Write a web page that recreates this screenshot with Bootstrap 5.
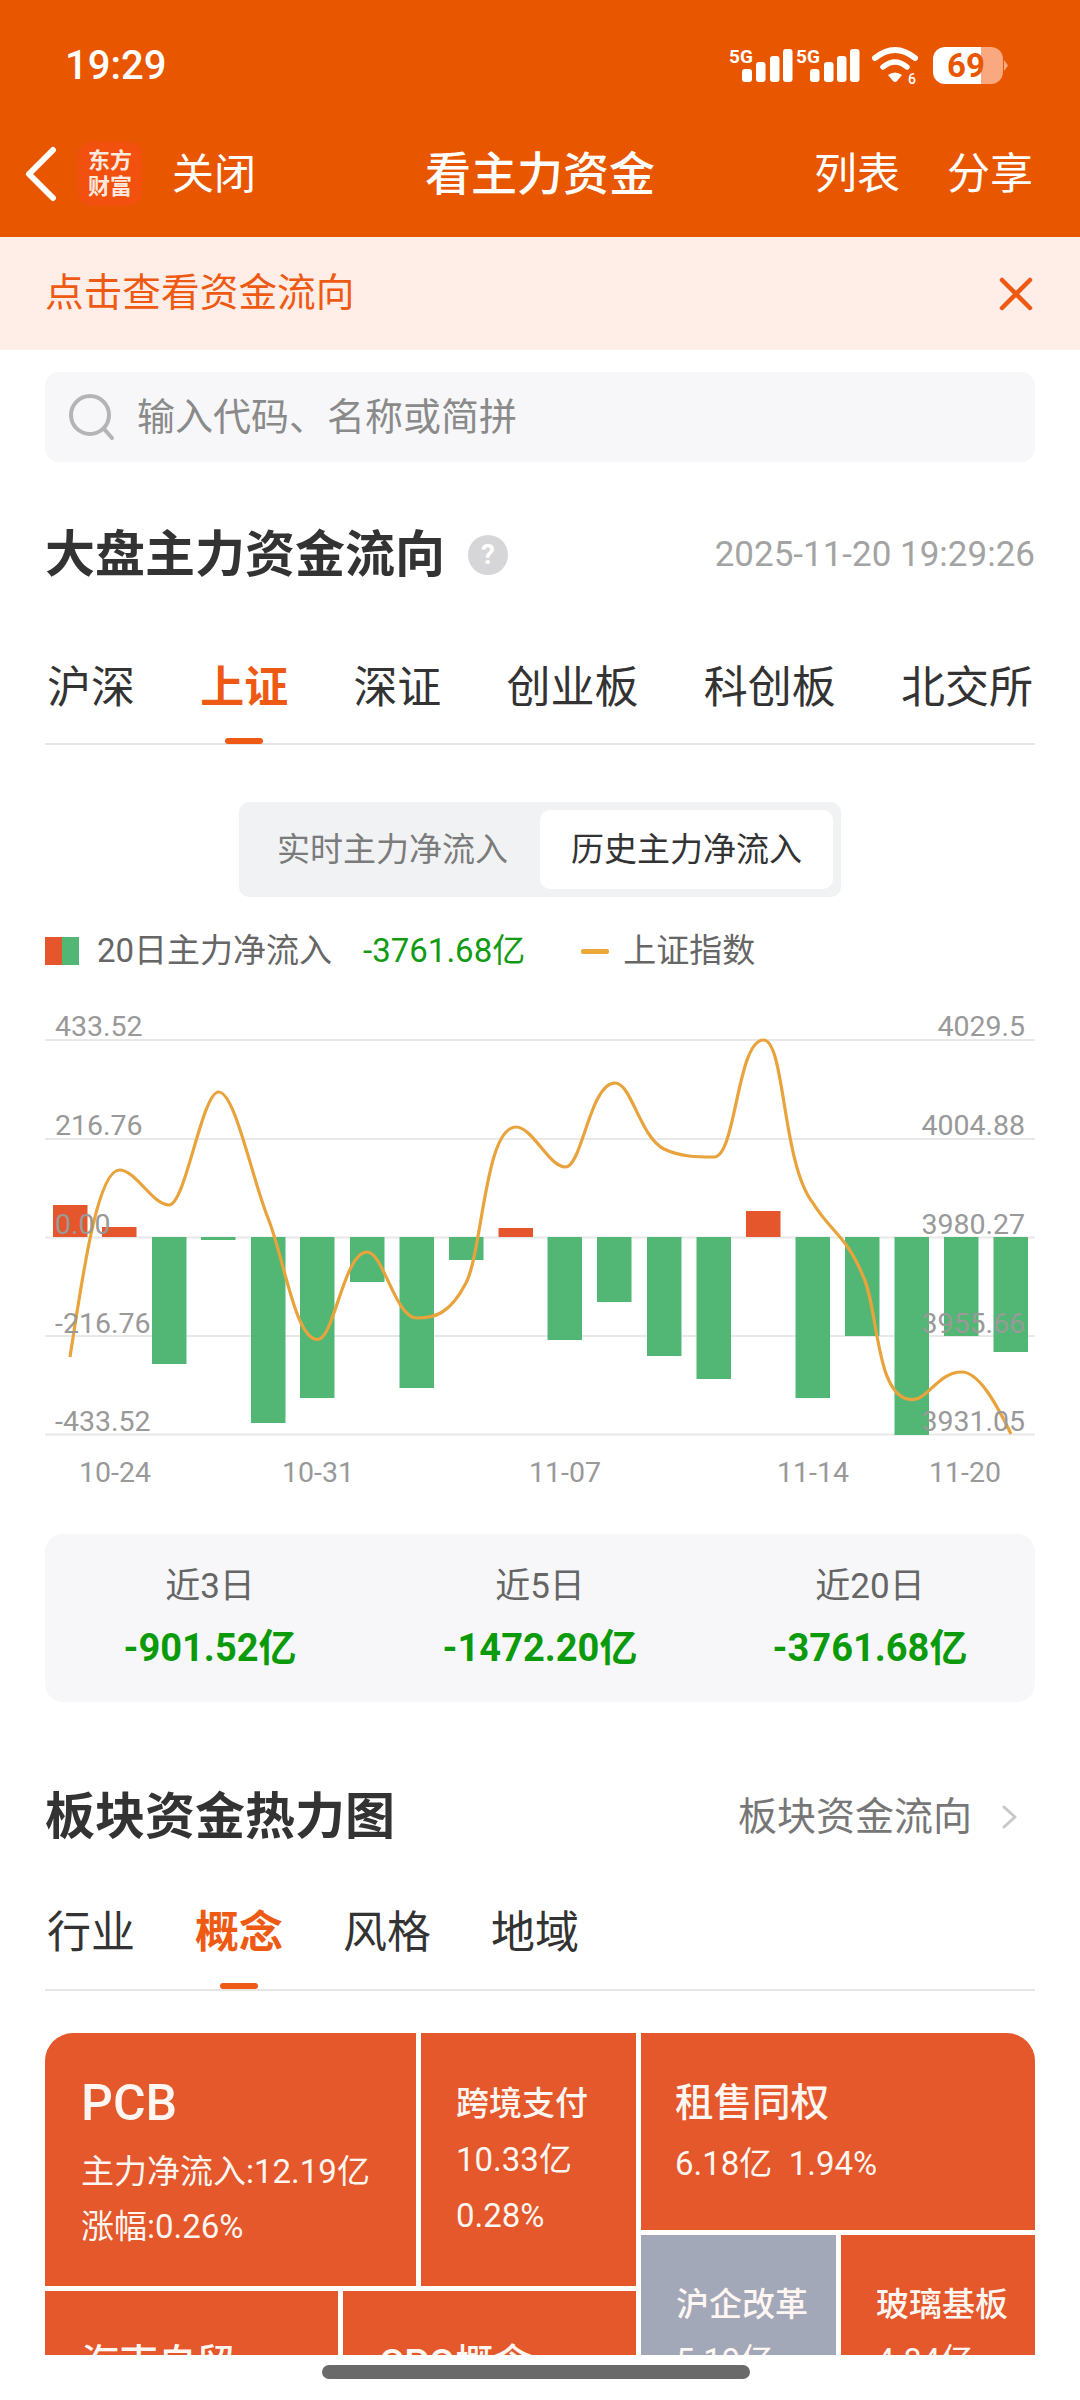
<!DOCTYPE html>
<html lang="zh-CN">
<head>
<meta charset="utf-8">
<title>看主力资金</title>
<link rel="stylesheet" href="https://cdn.jsdelivr.net/npm/bootstrap@5.3.0/dist/css/bootstrap.min.css">
<style>
body{margin:0;width:1080px;height:2400px;overflow:hidden;background:#fff;font-family:Roboto,"Noto Sans CJK SC",sans-serif;color:#333}
.hdr{height:237px;background:#e85700;color:#fff}
.status-row{height:52px;padding-top:0;margin-top:0;position:relative;top:0}
.hdr-top{padding-top:40px}
.clock{font-size:40px;font-weight:500;line-height:52px;margin-left:65px}
.status-icons{margin-right:70px}
.nav-row{height:64px;margin-top:50px}
.back-btn{margin-left:24px;width:54px}
.logo-box{width:64px;height:64px;background:#f2500f;border-radius:13px;font-size:22px;line-height:26px;font-weight:700;color:#ffe9df;letter-spacing:0}
.close-txt{font-size:42px;margin-left:30px}
.nav-title{font-size:46px;font-weight:500}
.nav-side{width:222px}
.nav-left{width:316px}
.nav-right{width:316px;padding-right:47px;font-size:43px;gap:47px}
.tip{height:113px;background:#ffeee8;color:#ee5a14;font-size:38.7px;padding:0 47px 0 45px}
.wrap{padding:0 45px}
.search{height:90px;margin-top:22px;background:#f7f7f9;border-radius:14px;color:#8a8a8a;font-size:38px;padding-left:23px;gap:23px}
.sec-title{height:60px;font-size:50px;font-weight:700;color:#333;line-height:60px}
.sec-1{margin-top:63px}
.help{width:40px;height:40px;border-radius:50%;background:#d6d6d9;color:#fff;font-size:28px;font-weight:700;margin-left:23px}
.stamp{font-size:35px;color:#a3a3a3;font-weight:400}
.tabs{position:relative;border-bottom:2px solid #e6e6e6;font-size:44px;line-height:60px;color:#333;align-items:flex-start}
.tabs-a{margin-top:73px;height:87px;padding-left:2px;padding-right:2px}
.tabs-b{margin-top:56px;height:88px;padding-left:2px;gap:60px}
.tab-on{position:relative;color:#ee5a14;font-weight:700}
.tab-on::after{content:"";position:absolute;left:50%;margin-left:-19px;top:80px;width:38px;height:6px;border-radius:3px;background:#ee5a14}
.switcher{width:602px;height:95px;margin:57px auto 0;background:#f1f2f4;border-radius:10px;padding:8px;font-size:33px;color:#7b7b7b}
.sw-off{width:293px;padding-left:30px}
.sw-on{width:293px;height:79px;background:#fff;border-radius:10px;color:#333}
.legend-row{height:30px;margin-top:39px;font-size:33px;color:#666}
.swatch{width:34px;height:28px;background:linear-gradient(90deg,#e5562d 50%,#52b774 50%);margin-right:18px}
.green-num{color:#129a12;margin-left:31px}
.legend-line{width:28px;height:5px;border-radius:2px;background:#eba73a;margin-left:56px;margin-right:14px}
.chart{display:block;margin-top:34px}
.chart text{font-family:Roboto,sans-serif;font-size:28.5px;fill:#999}
.summary{height:168px;margin-top:34px;background:#f7f7f9;border-radius:18px;--bs-gutter-x:0}
.sum-label{font-size:35px;color:#666;line-height:54px;margin-top:26px}
.sum-val{font-size:38px;font-weight:700;color:#0a9a0a;line-height:56px;margin-top:6px}
.sec-2{margin-top:85px}
.more-link{font-size:39px;color:#777;font-weight:400;gap:30px;padding-right:18px}
.tm{height:322px;margin-top:42px;overflow:hidden;border-radius:28px 28px 0 0;gap:5px;color:#fff6f1}
.tm-left{width:591px;gap:5px}
.tm-right{width:394px;gap:5px}
.tm-row{gap:5px}
.cell{background:#e4582c;flex:none}
.cell-g{background:#a3a8b8}
.c-pcb{width:371px;height:253px;padding:45px 0 0 36px}
.c-kj{width:215px;height:253px;padding:43px 0 0 35px;font-size:33px;line-height:56px}
.c-zs{height:197px;padding:45px 0 0 34px}
.c-sm{width:195px;height:200px;padding:42px 0 0 35px;font-size:33px;line-height:56px}
.c-bm{width:293px;height:200px;padding:48px 0 0 36px}
.t-big{font-size:50px;line-height:50px;font-weight:500}
.t-mid{font-size:38.5px;line-height:50px;font-weight:500}
.t-b{font-weight:500}
.t-line{font-size:33px;line-height:55px}
.pill-bar{width:428px;height:14px;background:#6a6a6a;border-radius:7px;margin:10px 0 0 322px}
</style>
</head>
<body>
<header class="hdr hdr-top">
  <div class="d-flex justify-content-between align-items-center status-row">
    <div class="clock">19:29</div>
    <svg class="status-icons" width="282" height="42" viewBox="728 45 282 42">
      <g fill="#fff" font-family="Roboto,sans-serif" font-weight="700" font-size="19">
        <text x="729" y="63">5G</text>
        <text x="796" y="63">5G</text>
        <rect x="742" y="69" width="10" height="13" rx="3"/><rect x="756" y="62" width="9.5" height="20" rx="3"/><rect x="770" y="56" width="9.5" height="26" rx="3"/><rect x="783" y="49" width="9.5" height="33" rx="3"/>
        <rect x="810" y="69" width="9.5" height="13" rx="3"/><rect x="824" y="62" width="9.5" height="20" rx="3"/><rect x="837" y="56" width="9.5" height="26" rx="3"/><rect x="850" y="49" width="9.5" height="33" rx="3"/>
        <path d="M888 75Q895 70 902 75L897 81Q895 83 893 81Z"/>
        <text x="908" y="84" font-size="14" font-weight="500">6</text>
      </g>
      <g fill="none" stroke="#fff" stroke-linecap="round">
        <path d="M875 58Q895 42 915 58" stroke-width="6"/>
        <path d="M883 67Q895 57 907 67" stroke-width="5.5"/>
      </g>
      <path d="M945 47H981V84H945A12 12 0 0 1 933 72V59A12 12 0 0 1 945 47Z" fill="#fff"/>
      <path d="M981 47H991A12 12 0 0 1 1003 59V72A12 12 0 0 1 991 84H981Z" fill="#f9a87f"/>
      <path d="M1004 60L1008 65.500L1004 71Z" fill="#f9a87f"/>
      <text x="947" y="77" font-family="Roboto,sans-serif" font-weight="700" font-size="33" fill="#e85700">69</text>
    </svg>
  </div>
  <div class="d-flex align-items-center nav-row">
    <div class="d-flex align-items-center nav-left">
      <div class="back-btn d-flex">
        <svg width="34" height="56" viewBox="0 0 34 56"><path d="M29 4L5 28L29 52" fill="none" stroke="#fff" stroke-width="6" stroke-linecap="round" stroke-linejoin="round"/></svg>
      </div>
      <div class="logo-box d-flex flex-column align-items-center justify-content-center"><span>东方</span><span>财富</span></div>
      <div class="close-txt">关闭</div>
    </div>
    <div class="flex-grow-1 text-center nav-title">看主力资金</div>
    <div class="d-flex justify-content-end nav-right"><span>列表</span><span>分享</span></div>
  </div>
</header>

<div class="tip d-flex justify-content-between align-items-center">
  <span>点击查看资金流向</span>
  <svg width="34" height="34" viewBox="0 0 34 34"><path d="M3 3L31 31M31 3L3 31" stroke="#ee5a14" stroke-width="4.500" stroke-linecap="round"/></svg>
</div>

<main class="wrap">
  <div class="search d-flex align-items-center">
    <svg width="46" height="46" viewBox="0 0 46 46"><circle cx="22" cy="21" r="19" fill="none" stroke="#b4b4b6" stroke-width="4"/><path d="M37 36L44 44" stroke="#b4b4b6" stroke-width="4" stroke-linecap="round"/></svg>
    <span>输入代码、名称或简拼</span>
  </div>

  <div class="sec-title sec-1 d-flex justify-content-between align-items-center">
    <div class="d-flex align-items-center ps-0"><span class="ms-0">大盘主力资金流向</span><span class="help d-flex align-items-center justify-content-center">?</span></div>
    <span class="stamp">2025-11-20 19:29:26</span>
  </div>

  <div class="tabs tabs-a d-flex justify-content-between">
    <span>沪深</span><span class="tab-on">上证</span><span>深证</span><span>创业板</span><span>科创板</span><span>北交所</span>
  </div>

  <div class="switcher d-flex align-items-center">
    <div class="sw-off">实时主力净流入</div>
    <div class="sw-on d-flex align-items-center justify-content-center">历史主力净流入</div>
  </div>

  <div class="legend-row d-flex align-items-center">
    <span class="swatch"></span><span>20日主力净流入</span><span class="green-num">-3761.68亿</span>
    <span class="legend-line"></span><span>上证指数</span>
  </div>
</main>

<svg class="chart" width="1080" height="500" viewBox="0 1000 1080 500">
  <g stroke="#e8e8e8" stroke-width="2">
    <path d="M45 1040H1035M45 1139H1035M45 1237.500H1035M45 1336H1035M45 1434.500H1035"/>
  </g>
  <g fill="#e5562d">
    <rect x="53" y="1205" width="34.500" height="32"/>
    <rect x="102" y="1227" width="34.500" height="10"/>
    <rect x="498.500" y="1228" width="34.500" height="9"/>
    <rect x="746" y="1211" width="34.500" height="26"/>
  </g>
  <g fill="#52b774">
    <rect x="152" y="1237" width="34.500" height="127"/>
    <rect x="201" y="1237" width="34.500" height="3"/>
    <rect x="251" y="1237" width="34.500" height="186"/>
    <rect x="300" y="1237" width="34.500" height="161"/>
    <rect x="350" y="1237" width="34.500" height="45"/>
    <rect x="399.500" y="1237" width="34.500" height="151"/>
    <rect x="449" y="1237" width="34.500" height="23"/>
    <rect x="547.500" y="1237" width="34.500" height="103"/>
    <rect x="597" y="1237" width="34.500" height="65"/>
    <rect x="647" y="1237" width="34.500" height="119"/>
    <rect x="696.500" y="1237" width="34.500" height="142"/>
    <rect x="795.500" y="1237" width="34.500" height="161"/>
    <rect x="845" y="1237" width="34.500" height="99"/>
    <rect x="894.500" y="1237" width="34.500" height="198"/>
    <rect x="944" y="1237" width="34.500" height="99"/>
    <rect x="993.500" y="1237" width="34.500" height="115"/>
  </g>
  <path fill="none" stroke="#e8a33d" stroke-width="3.200" d="M70 1357C82 1280 97 1170 119.500 1170C136 1170 152.500 1205 169 1205C185.500 1205 202 1092 218.600 1092C235 1092 251.500 1177 268 1218C284.500 1259 295 1339.500 317.700 1339.500C334 1339.500 344 1252 367 1252C383.500 1252 395 1318 417 1318C433.500 1318 449.500 1315 466 1283C482.500 1251 485 1127 516 1127C532.500 1127 549 1167 565.400 1167C582 1167 590 1083 615 1083C631.500 1083 640 1137 664 1149C680.500 1157 697.500 1157 714 1157C736 1157 737 1040 763.500 1040C785 1040 782 1164 813 1203C829 1230 846 1235 862.600 1275C879 1308 875 1399.600 912 1399.600C928.500 1399.600 938 1372 961.700 1372C978 1372 994.500 1400 1011 1434"/>
  <g>
    <text x="55" y="1036">433.52</text>
    <text x="55" y="1135">216.76</text>
    <text x="55" y="1234">0.00</text>
    <text x="55" y="1333">-216.76</text>
    <text x="55" y="1431">-433.52</text>
  </g>
  <g text-anchor="end">
    <text x="1025" y="1036">4029.5</text>
    <text x="1025" y="1135">4004.88</text>
    <text x="1025" y="1234">3980.27</text>
    <text x="1025" y="1333">3955.66</text>
    <text x="1025" y="1431">3931.05</text>
  </g>
  <g text-anchor="middle">
    <text x="115" y="1482">10-24</text>
    <text x="318" y="1482">10-31</text>
    <text x="565" y="1482">11-07</text>
    <text x="813" y="1482">11-14</text>
    <text x="965" y="1482">11-20</text>
  </g>
</svg>

<section class="wrap">
  <div class="summary row text-center">
    <div class="col-4"><div class="sum-label">近3日</div><div class="sum-val">-901.52亿</div></div>
    <div class="col-4"><div class="sum-label">近5日</div><div class="sum-val">-1472.20亿</div></div>
    <div class="col-4"><div class="sum-label">近20日</div><div class="sum-val">-3761.68亿</div></div>
  </div>

  <div class="sec-title sec-2 d-flex justify-content-between align-items-center">
    <span>板块资金热力图</span>
    <span class="more-link d-flex align-items-center"><span>板块资金流向</span><svg width="15" height="24" viewBox="0 0 15 24"><path d="M2 2L13 12L2 22" fill="none" stroke="#c8c8c8" stroke-width="3" stroke-linecap="round" stroke-linejoin="round"/></svg></span>
  </div>

  <div class="tabs tabs-b d-flex">
    <span>行业</span><span class="tab-on">概念</span><span>风格</span><span>地域</span>
  </div>

  <div class="tm d-flex">
    <div class="tm-left d-flex flex-column">
      <div class="tm-row d-flex">
        <div class="cell c-pcb">
          <div class="t-big">PCB</div>
          <div class="t-line mt-3">主力净流入:12.19亿</div>
          <div class="t-line">涨幅:0.26%</div>
        </div>
        <div class="cell c-kj">
          <div class="t-b">跨境支付</div>
          <div>10.33亿</div>
          <div>0.28%</div>
        </div>
      </div>
      <div class="tm-row d-flex">
        <div class="cell c-bm"><div class="t-mid">海南自贸</div></div>
        <div class="cell c-bm"><div class="t-mid">CPO概念</div></div>
      </div>
    </div>
    <div class="tm-right d-flex flex-column">
      <div class="cell c-zs">
        <div class="t-mid">租售同权</div>
        <div class="t-line mt-2">6.18亿&nbsp;&nbsp;1.94%</div>
      </div>
      <div class="tm-row d-flex">
        <div class="cell cell-g c-sm"><div class="t-b">沪企改革</div><div>5.19亿</div></div>
        <div class="cell c-sm"><div class="t-b">玻璃基板</div><div>4.84亿</div></div>
      </div>
    </div>
  </div>
</section>
<div class="pill-bar"></div>
<script src="https://cdn.jsdelivr.net/npm/bootstrap@5.3.0/dist/js/bootstrap.bundle.min.js"></script>
</body>
</html>
